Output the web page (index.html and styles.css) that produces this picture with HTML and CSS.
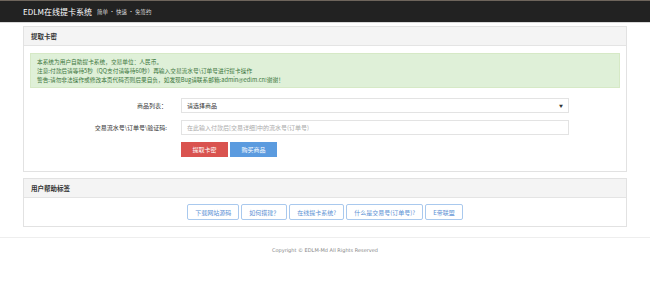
FILE: index.html
```html
<!DOCTYPE html>
<html lang="zh-CN">
<head>
<meta charset="utf-8">
<title>EDLM在线提卡系统</title>
<link rel="stylesheet" href="styles.css">
</head>
<body>
<header class="navbar">
  <div class="nav-inner">
    <span class="brand">EDLM在线提卡系统</span>
    <span class="slogan">简单 · 快速 · 免签约</span>
  </div>
</header>
<main class="container">
  <section class="panel">
    <div class="panel-heading">提取卡密</div>
    <div class="panel-body">
      <div class="alert">
        <p>本系统为用户自助提卡系统，交易单位：人民币。</p>
        <p>注意:付款后请等待5秒（QQ支付请等待60秒）再输入交易流水号\订单号进行提卡操作</p>
        <p>警告:请勿非法操作或修改本页代码否则后果自负，如发现Bug请联系邮箱:admin@edlm.cn!谢谢！</p>
      </div>
      <div class="form">
        <label class="form-label">商品列表：</label>
        <div class="select"><span>请选择商品</span><span class="caret">▼</span></div>
        <label class="form-label">交易流水号\订单号\验证码:</label>
        <div class="input placeholder">在此输入付款后[交易详细]中的流水号(订单号)</div>
        <span></span>
        <div class="btns">
          <button class="btn btn-red">提取卡密</button>
          <button class="btn btn-blue">购买商品</button>
        </div>
      </div>
    </div>
  </section>
  <section class="panel panel-help">
    <div class="panel-heading">用户帮助标签</div>
    <div class="panel-body help-body">
      <a class="tag">下载网站源码</a>
      <a class="tag">如何搭建？</a>
      <a class="tag">在线提卡系统?</a>
      <a class="tag">什么是交易号(订单号)?</a>
      <a class="tag">E帝联盟</a>
    </div>
  </section>
</main>
<footer class="footer">Copyright © EDLM-Md All Rights Reserved</footer>
</body>
</html>
```
FILE: styles.css
```css
* { box-sizing: border-box; }
html, body { margin: 0; padding: 0; background: #fff; }
body {
  font-family: "Noto Sans CJK SC", "Noto Sans", sans-serif;
  color: #333;
  font-size: 6px;
  height: 291px;
  overflow: hidden;
}
p { margin: 0; }
.navbar {
  height: 23px;
  background: #222;
  border-top: 1px solid #6e655c;
  border-bottom: 1px solid #d8d8d8;
}
.nav-inner {
  padding-left: 23px;
  display: flex;
  align-items: center;
  height: 21px;
  gap: 5px;
}
.brand { color: #fff; font-size: 8px; }
.slogan { color: #ddd; font-size: 5.5px; padding-top: 1px; }
.container { padding: 3px 23px 0; }
.panel {
  border: 1px solid #e2e2e2;
  background: #fff;
}
.panel-heading {
  height: 19px;
  background: #f4f4f4;
  border-bottom: 1px solid #e4e4e4;
  padding: 0 7px;
  display: flex;
  align-items: center;
  font-weight: bold;
  font-size: 6.5px;
  color: #333;
}
.panel-body { padding: 7px 6px 14px; }
.alert {
  background: #dff0d8;
  border: 1px solid #d6e9c6;
  color: #3c763d;
  font-size: 5.7px;
  line-height: 9px;
  padding: 3px 6px 4px;
  height: 35px;
}
.form {
  display: grid;
  grid-template-columns: 137px 388px;
  column-gap: 14px;
  row-gap: 7px;
  margin-top: 10px;
  align-items: center;
}
.form-label { text-align: right; font-size: 6px; color: #333; }
.select, .input {
  height: 15px;
  border: 1px solid #e3e3e3;
  display: flex;
  align-items: center;
  padding: 0 5px;
  font-size: 6px;
  color: #333;
}
.select { justify-content: space-between; }
.caret { font-size: 4px; color: #333; }
.placeholder { color: #aaa; }
.btns { display: flex; gap: 2px; }
.btn {
  width: 47px;
  height: 15px;
  border: none;
  color: #fff;
  font-family: inherit;
  font-size: 6px;
  padding: 0;
  margin: 0;
}
.btn-red { background: #d9534f; }
.btn-blue { background: #5b9bdf; }
.panel-help { margin-top: 6px; }
.help-body {
  display: flex;
  justify-content: center;
  gap: 2px;
  padding: 6px 0 6px;
}
.tag {
  height: 16px;
  padding: 0 7px;
  border: 1px solid #a9c9ee;
  border-radius: 2px;
  color: #5a8fd3;
  font-size: 6px;
  display: flex;
  align-items: center;
}
.footer {
  margin-top: 10px;
  border-top: 1px solid #eee;
  border-bottom: 1px solid #e2e2e2;
  height: 55px;
  text-align: center;
  font-family: "DejaVu Sans", sans-serif;
  font-size: 5px;
  color: #888;
  padding-top: 9px;
}
```
